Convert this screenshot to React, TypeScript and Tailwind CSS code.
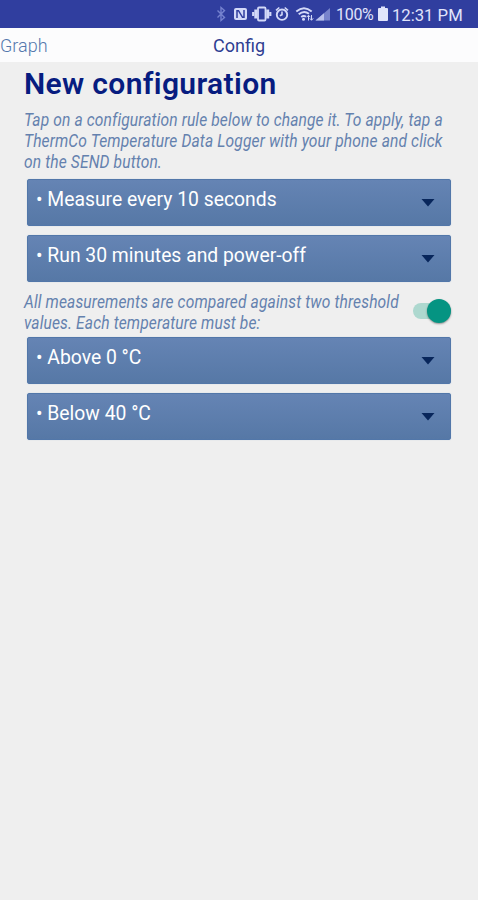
import React from "react";

function StatusBar() {
  return (
    <header className="flex h-7 items-start bg-[#303e9f] text-[#e0e4fb]">
      <svg width="134" height="28" viewBox="200 0 134 28" fill="none" stroke="#d3d9f8" className="ml-[200px] shrink-0">
        <path d="M217.500 10.500l7 7-3.500 3V7.500l3.500 3-7 7" stroke="#7582cf" strokeWidth="1.400" />
        <rect x="234" y="8" width="13" height="12" rx="2" fill="#d3d9f8" stroke="none" />
        <path d="M237 18v-7.300h1.500l4 6.600h1.500V10" stroke="#303e9f" strokeWidth="1.500" />
        <rect x="258" y="7.500" width="7.500" height="13" rx="1" strokeWidth="1.800" />
        <path d="M255.800 9.500v9M267.700 9.500v9" strokeWidth="3" />
        <path d="M253.200 12v4M270.300 12v4" strokeWidth="2.200" />
        <circle cx="282" cy="14.700" r="5.200" strokeWidth="1.900" />
        <path d="M276 10.300l3.300-2.800M288 10.300l-3.300-2.800M282 11.500v3.300l-2.200 1" strokeWidth="1.600" />
        <path d="M296.300 11.500q7.700-6.500 15.400 0M298.700 14.300q5.300-4.300 10.300-.5M301.200 17q2.500-2 4.800-.3" strokeWidth="1.900" />
        <circle cx="303.500" cy="19.300" r="1.500" fill="#d3d9f8" stroke="none" />
        <path d="M308.500 20.500v-5M306.700 17.200l1.800-2 1.800 2M311.500 15v5M309.800 18.300l1.700 2 1.700-2" strokeWidth="1" />
        <path d="M315.500 20.500L330 8v12.500z" fill="#7784cc" stroke="none" />
        <path d="M315.500 20.500l8.500-7.300v7.300z" fill="#b8c1ec" stroke="none" />
      </svg>
      <span className="ml-[2px] mt-[5px] w-[39px] whitespace-nowrap text-[16px] leading-5 tracking-[-0.3px]">100%</span>
      <svg width="10" height="28" viewBox="0 0 10 28" fill="#e0e4fb" className="ml-[3px] shrink-0">
        <path d="M3 6.500h4v1.500h2q1 0 1 1v11q0 1-1 1H1q-1 0-1-1V9q0-1 1-1h2z" />
      </svg>
      <span className="ml-[4px] mt-[5px] origin-left scale-x-[0.98] whitespace-nowrap text-[17px] leading-5">12:31 PM</span>
    </header>
  );
}

function RuleButton({ label }: { label: string }) {
  return (
    <button className="flex h-[46.5px] w-[424px] justify-between rounded-[2px] border border-[#5277a9] bg-gradient-to-b from-[#6584b4] to-[#5678a6] pl-2 pr-[15px] text-left text-white shadow-[0_0_1px_#a9bdd8]">
      <span className="mt-[7px] origin-left scale-x-[0.966] whitespace-nowrap text-[20px] leading-6">• {label}</span>
      <svg width="14" height="8" viewBox="0 0 14 8" className="mt-[19px]">
        <path d="M.5 0h13L7 7.500z" fill="#08265b" />
      </svg>
    </button>
  );
}

function Note({ lines }: { lines: string[] }) {
  return (
    <p className="text-[17.500px] italic leading-[21px] tracking-[0.15px] text-[#6481ae]">
      {lines.map((line) => (
        <span key={line} className="block w-0 origin-left scale-x-[0.89] whitespace-nowrap">{line}</span>
      ))}
    </p>
  );
}

export default function App() {
  return (
    <main className="h-[900px] w-[478px] overflow-hidden bg-[#efefef] font-['Roboto',sans-serif]">
      <StatusBar />
      <nav className="grid h-[34px] grid-cols-3 bg-[#fcfcfd] pt-[6px] text-[18px] leading-6">
        <span className="font-light text-[#5478ad]">Graph</span>
        <span className="text-center text-[#2f3e92]">Config</span>
      </nav>
      <section className="pl-6">
        <h1 className="pt-1 text-[30px] font-semibold leading-9 tracking-[0.35px] text-[#071c80]">New configuration</h1>
        <div className="mt-[8px]">
          <Note
            lines={[
              "Tap on a configuration rule below to change it. To apply, tap a",
              "ThermCo Temperature Data Logger with your phone and click",
              "on the SEND button.",
            ]}
          />
        </div>
        <div className="ml-[3px] mt-[6px] flex flex-col gap-[9.500px]">
          <RuleButton label="Measure every 10 seconds" />
          <RuleButton label="Run 30 minutes and power-off" />
        </div>
        <div className="mt-[10.500px] flex h-[45px] w-[427px] justify-between">
          <Note
            lines={[
              "All measurements are compared against two threshold",
              "values. Each temperature must be:",
            ]}
          />
          <button aria-label="Threshold comparison" className="mt-[11px] flex h-4 w-[38px] items-center justify-end rounded-full bg-[#add8cf]">
            <span className="size-6 shrink-0 rounded-full bg-[#059482] shadow-[0_1px_2px_#0006]" />
          </button>
        </div>
        <div className="ml-[3px] flex flex-col gap-[9.500px]">
          <RuleButton label="Above 0 °C" />
          <RuleButton label="Below 40 °C" />
        </div>
      </section>
    </main>
  );
}
